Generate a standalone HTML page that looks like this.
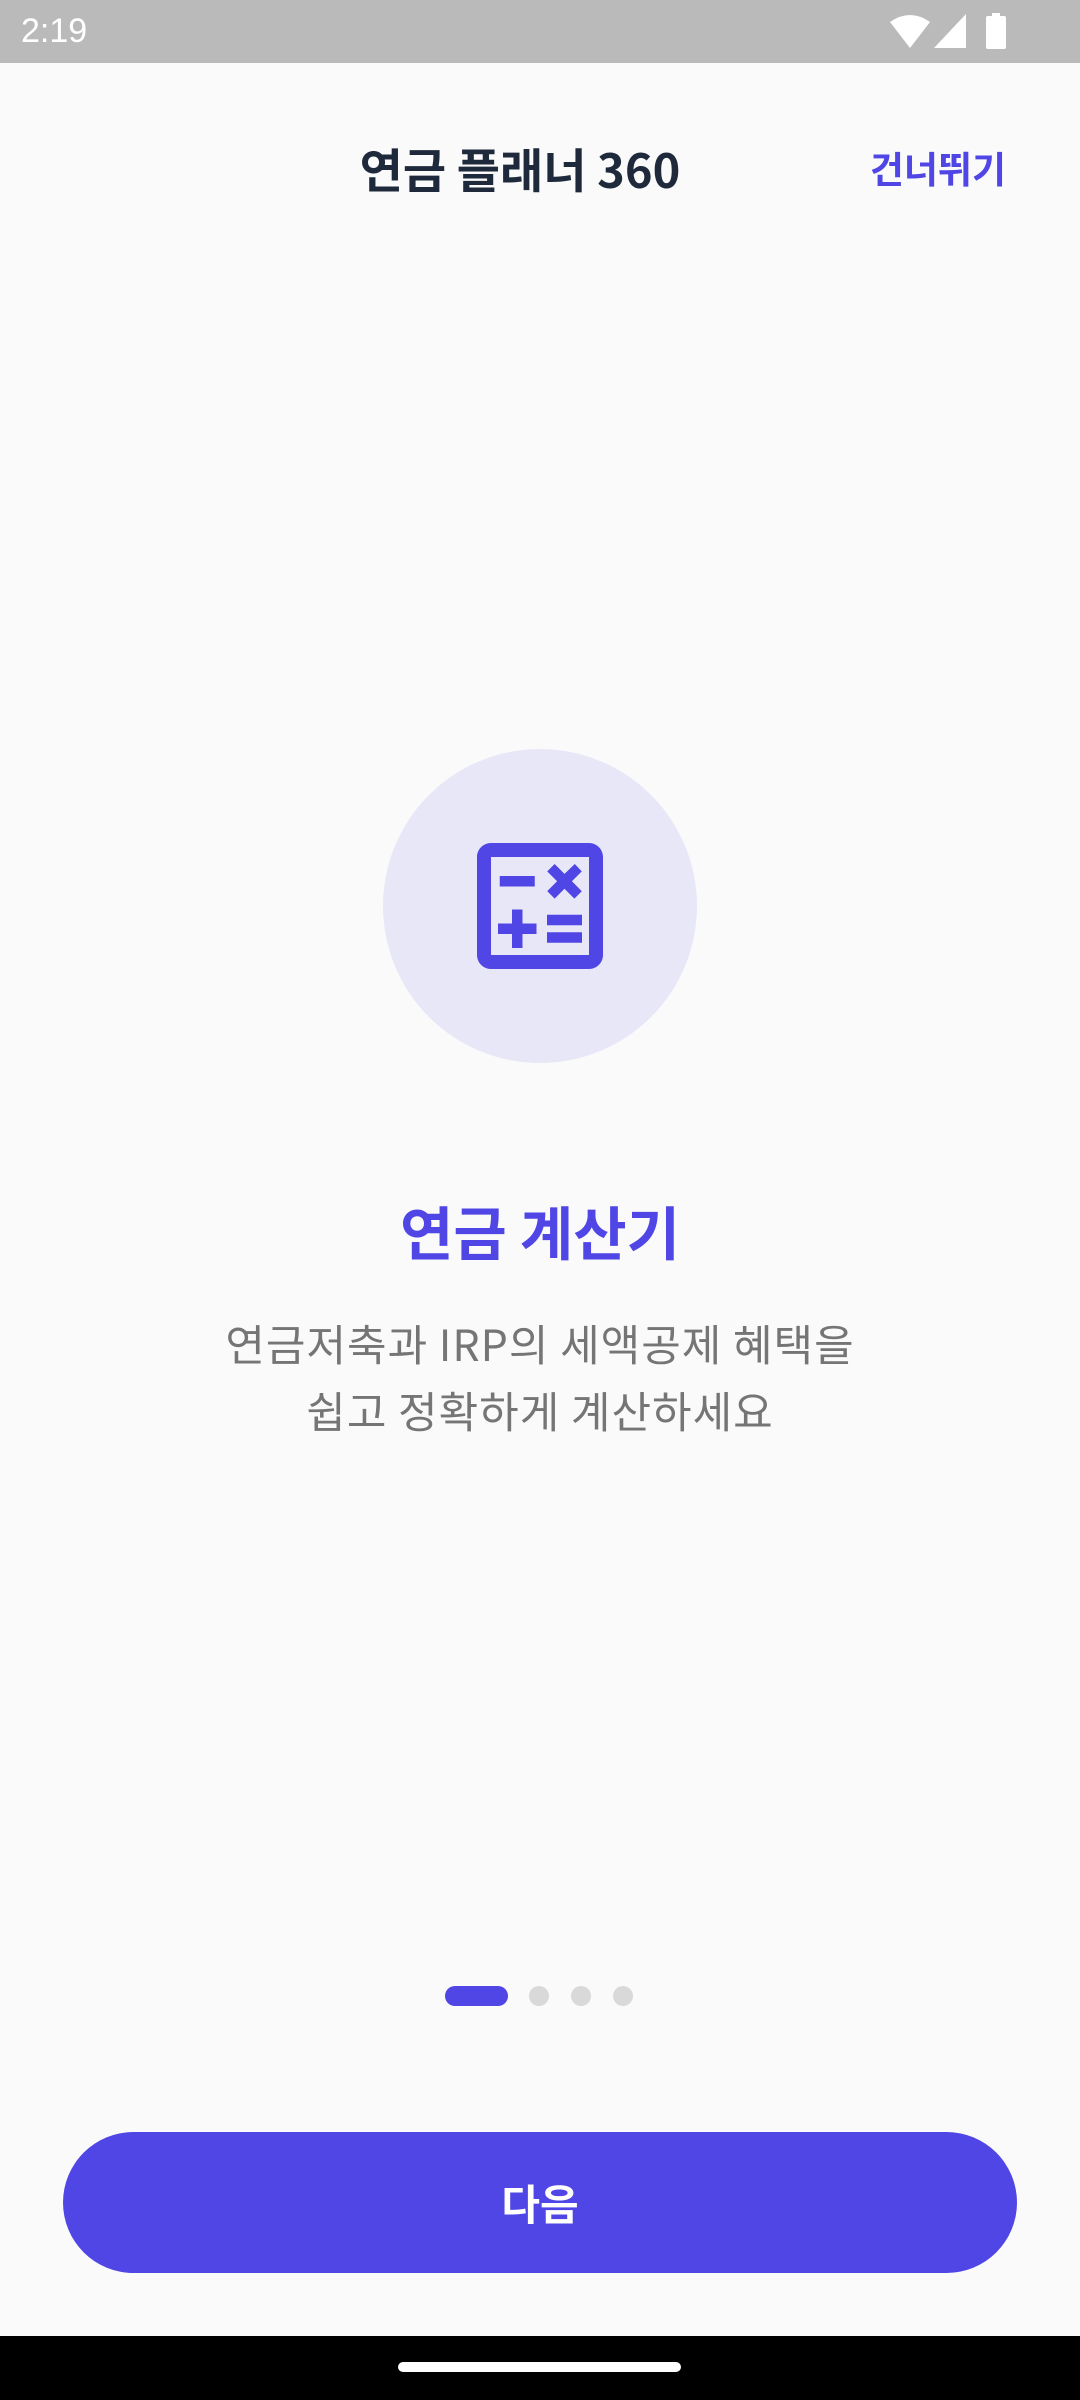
<!DOCTYPE html>
<html><head><meta charset="utf-8"><style>
*{margin:0;padding:0;box-sizing:border-box}
body{width:1080px;height:2400px;background:#fafafa;position:relative;overflow:hidden;font-family:"Noto Sans CJK KR","Liberation Sans",sans-serif}
.sb{position:absolute;left:0;top:0;width:1080px;height:63px;background:#bababa}
.time{position:absolute;left:21px;top:12px;font-size:34px;color:#fff;font-family:"Liberation Sans",sans-serif}
.title{position:absolute;left:0;width:1040px;text-align:center;top:138px;font-size:47px;line-height:60px;font-weight:bold;color:#1e293b}
.skip{position:absolute;right:74px;top:144px;font-size:37px;line-height:46px;font-weight:bold;color:#4f46e5}
.circle{position:absolute;left:383px;top:749px;width:314px;height:314px;border-radius:50%;background:#e8e7f8}
.h{position:absolute;left:0;width:1080px;text-align:center;top:1190px;font-size:58px;line-height:80px;font-weight:bold;color:#4f46e5}
.d{position:absolute;left:0;width:1080px;text-align:center;top:1310px;font-size:43px;letter-spacing:1px;line-height:67px;color:#757575}
.dot{position:absolute;top:1986px;width:20px;height:20px;border-radius:10px;background:#d9d9d9}
.btn{position:absolute;left:63px;top:2132px;width:954px;height:141px;border-radius:71px;background:#4f46e5;color:#fff;font-size:42px;font-weight:bold;text-align:center;line-height:141px}
.nav{position:absolute;left:0;top:2336px;width:1080px;height:64px;background:#000}
.handle{position:absolute;left:398px;top:2362px;width:283px;height:10px;border-radius:5px;background:#fff}
</style></head><body>
<div class="sb"><div class="time">2:19</div>
<svg style="position:absolute;left:890px;top:14px" width="40" height="34" viewBox="0 0 40 34"><path d="M0 8 Q20 -6 40 8 L20 34 Z" fill="#fff"/></svg>
<svg style="position:absolute;left:934px;top:14px" width="32" height="34" viewBox="0 0 32 34"><path d="M32 0 V34 H0 Z" fill="#fff"/></svg>
<svg style="position:absolute;left:986px;top:13px" width="20" height="36" viewBox="0 0 20 36"><rect x="6" y="0" width="8" height="4" fill="#fff"/><rect x="0" y="3" width="20" height="33" rx="2" fill="#fff"/></svg>
</div>
<div class="title">연금 플래너 360</div>
<div class="skip">건너뛰기</div>
<div class="circle"></div>
<svg style="position:absolute;left:456px;top:822px" width="168" height="168" viewBox="0 0 24 24"><path fill="#4f46e5" d="M19 3H5c-1.1 0-2 .9-2 2v14c0 1.1.9 2 2 2h14c1.1 0 2-.9 2-2V5c0-1.1-.9-2-2-2zm0 16H5V5h14v14zM6.25 7.72h5v1.5h-5zM13 15.75h5v1.5h-5zm0-2.5h5v1.5h-5zM8 18h1.5v-2h2v-1.5h-2v-2H8v2H6v1.5h2zm6.09-7.05l1.41-1.41 1.41 1.41 1.06-1.06-1.41-1.42 1.41-1.41L16.97 6 15.5 7.41 14.09 6l-1.06 1.06 1.41 1.41-1.41 1.41z"/></svg>
<div class="h">연금 계산기</div>
<div class="d">연금저축과 IRP의 세액공제 혜택을<br>쉽고 정확하게 계산하세요</div>
<div class="dot" style="left:445px;width:63px;background:#4f46e5"></div>
<div class="dot" style="left:529px"></div>
<div class="dot" style="left:571px"></div>
<div class="dot" style="left:613px"></div>
<div class="btn">다음</div>
<div class="nav"></div><div class="handle"></div>
</body></html>
